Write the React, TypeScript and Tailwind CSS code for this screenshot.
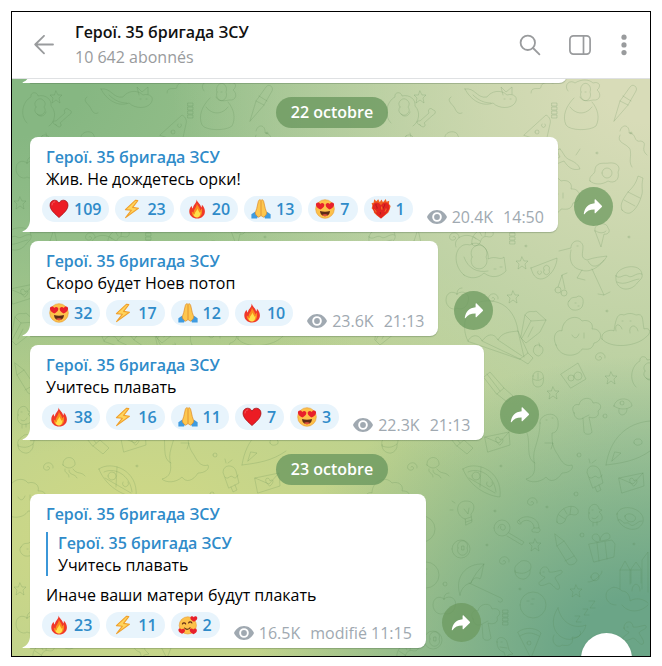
import type { ReactNode } from "react";

type EmojiName = "heart" | "bolt" | "fire" | "pray" | "loveEyes" | "burningHeart" | "adore";

type Message = {
  text: string;
  quote?: { author: string; text: string };
  reactions: { emoji: EmojiName; count: number }[];
  views: string;
  time: string;
};

const CHANNEL = "Герої. 35 бригада ЗСУ";

const days: { date: string; messages: Message[] }[] = [
  {
    date: "22 octobre",
    messages: [
      {
        text: "Жив. Не дождетесь орки!",
        reactions: [
          { emoji: "heart", count: 109 },
          { emoji: "bolt", count: 23 },
          { emoji: "fire", count: 20 },
          { emoji: "pray", count: 13 },
          { emoji: "loveEyes", count: 7 },
          { emoji: "burningHeart", count: 1 },
        ],
        views: "20.4K",
        time: "14:50",
      },
      {
        text: "Скоро будет Ноев потоп",
        reactions: [
          { emoji: "loveEyes", count: 32 },
          { emoji: "bolt", count: 17 },
          { emoji: "pray", count: 12 },
          { emoji: "fire", count: 10 },
        ],
        views: "23.6K",
        time: "21:13",
      },
      {
        text: "Учитесь плавать",
        reactions: [
          { emoji: "fire", count: 38 },
          { emoji: "bolt", count: 16 },
          { emoji: "pray", count: 11 },
          { emoji: "heart", count: 7 },
          { emoji: "loveEyes", count: 3 },
        ],
        views: "22.3K",
        time: "21:13",
      },
    ],
  },
  {
    date: "23 octobre",
    messages: [
      {
        text: "Иначе ваши матери будут плакать",
        quote: { author: CHANNEL, text: "Учитесь плавать" },
        reactions: [
          { emoji: "fire", count: 23 },
          { emoji: "bolt", count: 11 },
          { emoji: "adore", count: 2 },
        ],
        views: "16.5K",
        time: "modifié 11:15",
      },
    ],
  },
];

const HEART = "M10 18.6C7 15.6 1 11.4 1 6.2 1 3 3.2 1.2 5.6 1.2c2 0 3.5 1.1 4.4 2.9.9-1.8 2.4-2.9 4.4-2.9C16.8 1.2 19 3 19 6.2c0 5.2-6 9.4-9 12.4Z";

const emojis: Record<EmojiName, ReactNode> = {
  heart: (
    <>
      <path d={HEART} fill="#ec1c24" stroke="#9e1016" strokeWidth=".7" />
      <path d="M3 6c0-2 1.2-3.2 2.8-3.2" fill="none" stroke="#f6595c" strokeWidth="1" strokeLinecap="round" />
    </>
  ),
  bolt: (
    <path
      d="M13.6 1.2 3.4 10.6l6 .6-5.8 7.4L16.4 9.2l-5.8-.8 5.2-6.8Z"
      fill="#ffd45c"
      stroke="#f0a02c"
      strokeWidth="1.1"
      strokeLinejoin="round"
    />
  ),
  fire: (
    <>
      <path
        d="M9.6.6c1 3.4 4 4.4 4.6 8 .6-.8.8-1.7.7-2.8 2 2 3 4.3 3 6.7 0 4.3-3.4 7-7.7 7-4.4 0-7.9-2.7-7.9-7 0-2.3 1-4.3 2.3-5.7.1 1.3.5 2.1 1.3 2.7C6 6 9.8 4.5 9.6.6Z"
        fill="#f0382a"
      />
      <path
        d="M9.8 4.2c.6 2.4 3 3.6 3.4 7.2l1.6-2c1 4.6-.4 9-4.6 9-3.6 0-5.6-2.4-5.4-5.8l1.9 1.2c-.5-3.4 3.3-5.2 3.1-9.6Z"
        fill="#fb8c1d"
      />
      <path d="M10.4 9.2c.2 1.7 1.8 2.6 1.8 4.6l1.2-1c.3 3-1 5.6-3.3 5.6-2.3 0-3.7-1.5-3.6-3.7l1.4.7c-.3-2.5 2.2-3.5 2.5-6.2Z" fill="#ffe14a" />
    </>
  ),
  pray: (
    <>
      <path d="M.4 19.6v-4.4l3.6-2.4 3.4 3.8-1.4 3Z" fill="#3f9be0" />
      <path d="M19.6 19.6v-4.4L16 12.8l-3.4 3.8 1.4 3Z" fill="#3f9be0" />
      <path
        d="M9.9 1.2C8.7.4 7.6 1 7.3 2.5L5.7 9.6 4.2 14c.4 1.6 1.5 3.2 3.4 4.2l2.4-1.6 2.4 1.6c1.9-1 3-2.6 3.4-4.2l-1.5-4.4-1.6-7.1c-.3-1.5-1.4-2.1-2.4-1.3Z"
        fill="#fdc74f"
        stroke="#dc8a2b"
        strokeWidth=".7"
      />
      <path d="M10 2v14.6" stroke="#dc8a2b" strokeWidth=".8" />
    </>
  ),
  loveEyes: (
    <>
      <circle cx="10" cy="10" r="9.3" fill="#fdc14a" stroke="#e7992f" strokeWidth=".6" />
      <path d="M5.4 10.6C3.6 9.6.9 8 .9 5.7.9 3.2 4 2.9 5.2 5c1.5-2 4.4-1 4.1 1.2-.2 2-2.3 3.4-3.9 4.4Z" fill="#e8212b" />
      <path d="M14.6 10.6c1.8-1 4.5-2.6 4.5-4.9 0-2.5-3.1-2.8-4.3-.7-1.5-2-4.4-1-4.1 1.2.2 2 2.3 3.4 3.9 4.4Z" fill="#e8212b" />
      <path d="M5 12c3.2 1 6.8 1 10 0-.2 3.2-2 5.2-5 5.2S5.2 15.2 5 12Z" fill="#5e2b16" />
      <path d="M7 16c1-1 5-1 6 0-1.6 1.6-4.4 1.6-6 0Z" fill="#e2543f" />
    </>
  ),
  burningHeart: (
    <>
      <path
        d="M2.6 3.8 3.2.3l2.2 2L7.2.2l1.6 3L10.4.4l1.6 2.8L14.8 0l.8 2.8 2.6-1-.2 3.2 1.6 2-1 3.8-1.4 3-3.2 2.4-4 3.4-4.2-3-2.8-2.8-.4-2.4L.6 9.2l.8-2.2L.6 4Z"
        fill="#f0601f"
      />
      <path d="M10 19.6C7.2 17 1.6 12.4 1.6 8c0-2.6 1.900-4.500 3.900-4.500 1.900 0 3.600 1.300 4.500 3 .9-1.700 2.600-3 4.500-3 2 0 3.900 1.900 3.900 4.500 0 4.400-5.600 9-8.400 11.600Z" fill="#e3241f" />
      <path d="M5 5c-.6 2 1.600 2.600 1 4.600M12.400 9.400c-.4-1.600 1.600-2.400 1.400-4.200M9 13c.8.8.6 1.800 0 2.600" fill="none" stroke="#9f1813" strokeWidth=".8" />
      <path d="M3.4 10.6c1 .6 1.6 1.6 1.6 2.8M10.6 7.600c-.2 1.200.6 1.600.3 3M15 9.600c.2 1.400-.6 2-1 3" fill="none" stroke="#f58a22" strokeWidth="1" />
    </>
  ),
  adore: (
    <>
      <circle cx="9.8" cy="10.4" r="8.6" fill="#fdc14a" stroke="#e7992f" strokeWidth=".6" />
      <path d="M4.4 9c.6-1.5 2.6-1.5 3.3 0M10.6 8c.6-1.5 2.6-1.5 3.3 0M6.6 13c1.6 1.8 4 1.8 5.4-.2" fill="none" stroke="#5e2b16" strokeWidth="1.1" strokeLinecap="round" />
      <path d="M16 6.8c-1.8-.9-4-2.2-3.6-4.3.4-1.8 2.7-1.7 3.3-.3.9-1.5 3.5-1.2 3.6.8.1 1.9-1.9 2.9-3.3 3.8Z" fill="#e8212b" />
      <path d="M4 18.8c-1.7-.8-3.9-2-3.6-4 .3-1.7 2.6-1.6 3.2-.2.8-1.4 3.2-1.2 3.4.6.2 1.7-1.7 2.8-3 3.6Z" fill="#e8212b" />
      <path d="M15.6 19.2c-1.8-.8-4.2-2.2-3.9-4.4.3-1.9 2.9-1.8 3.5-.2.9-1.6 3.6-1.3 3.7.8.1 1.8-1.9 2.9-3.3 3.8Z" fill="#e8212b" />
    </>
  ),
};

// Outlines are drawn around their own centre and placed by the list below.
const outlines: Record<string, string> = {
  star: "M0-6 2-2 6-2 3 1 4 6 0 3-4 6-3 1-6-2-2-2Z",
  dot: "M-1 0a1 1 0 1 0 2 0 1 1 0 1 0-2 0",
  ring: "M-2 0a2 2 0 1 0 4 0 2 2 0 1 0-4 0",
  spiral: "M0 0c2-2 4 2 1 3-4 1-6-3-3-6 4-3 9 0 8 4",
  bone: "M-7 6c-4-1-4-5 0-4L2-6c-2-4 2-6 4-3 3 0 3 4 0 5L-3 4c3 3-1 6-4 2Z",
  squiggle: "M-4-10c-5 3 1 7 3 10s3 8 8 6",
  hook: "M-12 4c0-8 10-2 10-6s6-6 12-4",
  diver: "M-30-6c10-2 12 10 22 8 4-6 14-8 20-2 6-2 12 2 8 8s-16 6-22 0c-10 4-22-2-28-14ZM8 0l-2-8 5 5 6-5v7M9 4h1M15 4h1M-22 0c6 6 12 8 18 8",
  cheese: "M-14 10 8-10c4 2 5 6 4 9l-4 18ZM-3 7a2 2 0 1 0 4 0 2 2 0 1 0-4 0M4-1a2 2 0 1 0 3 0",
  bar: "M-2-8h5v3h-5Zm0 4h5v3h-5Zm0 4h5v3h-5Zm0 4h5v3h-5Z",
  dog: "M-14-8c-5-6 2-12 7-8 6-4 14-4 18 0 6-2 9 3 4 7 5 4 3 11-4 10-8 2-12 0-13-3M-8-1c-8 8-12 18-8 27 4 6 24 6 30 1 4-8 2-17-4-24M-1-7a5 6 0 1 0 9 0 5 6 0 1 0-9 0M3-7h1M-12 8c6 8 16 8 22 0",
  brush: "M-10 18-4-2 6-16c3-4 8 0 6 4L4 2ZM-4-2l8 4M-1-7l8 5",
  bear: "M-14 14c-8-8-4-22 4-26-1-5 6-6 7-1 8-2 14 4 13 10 6 6 4 16-2 20M-5-2a5 5 0 1 0 8 0 5 5 0 1 0-8 0M-4 5c3 4 8 2 9-2",
  lizard: "M-8-12c4 4 4 8 8 10s10 4 12 10c-8 2-12-2-16-8-6 2-12 6-14 4s6-6 10-8c-2-4-4-8 0-8ZM8-6l4-6",
  egg: "M-16 8c-2-6 6-6 5-12 2-8 10-5 14-6 8-1 12 4 9 9 2 8-4 12-10 9-6 4-14 4-18 0ZM-4 0a5 5 0 1 0 10 0 5 5 0 1 0-10 0",
  bottle: "M-12 16c-3-6 2-12 6-18 4-4 8-8 10-16l5 2c-2 8 0 12-1 16-2 8-6 16-12 19-3 1-6-1-8-3ZM-6-2l12 6M-10 6l11 6",
  branch: "M-12-14c2-8 10-6 9 2 8 0 4 10 12 8 8 2-2 8 6 14M-12-10c-4 8 6 8 10 14 2 8-2 12 2 18",
  cone: "M-7-4c-2-8 12-10 13-3 3 3 0 7-4 6L-1 12-7-4ZM-6-4c4 3 8 2 10 0",
  cat: "M-26-14c-4-10 12-16 20-8M-18 14c-14-12-8-34 6-30 8-6 20 4 18 14 8-4 12 2 16-2l2 14c-6 6-14 8-22 2-6 6-14 6-20 2ZM-10-4a8 8 0 1 0 14 0 8 8 0 1 0-14 0M-18-4c4 12 14 16 24 14M12 8h2M18 6h2",
  pizza: "M-13-5 13-15c0 6-4 16-12 20C-6 8-11 4-13-5ZM0-3a3 3 0 1 0 5 0 3 3 0 1 0-5 0M-6-2a2 2 0 1 0 3 0",
  cherry: "M-5 5a3 3 0 1 0 6 0 3 3 0 1 0-6 0M1 8a3 3 0 1 0 6 0 3 3 0 1 0-6 0M-2 2 2-10 5 4M2-10l5-2",
  bird: "M-21-10l12-3c0-8 10-10 12-2 0 8-3 12 4 14 8-3 14-3 20-4-4 8-16 18-26 14C-12 6-10-6-9-11M2 9l-5 8 8 2M12 8l12 26-6-1M24 34l6-3M-3-15h1M8 0c4 8 10 6 16-1",
  burger: "M-13-2C-12-12 12-16 13-4M-13-2c4 4 8-3 12 0s8-4 14-2c1 4-2 6-4 8-8 12-24 8-22-6ZM-12 4c8 4 14-2 22-3",
  berry: "M-7-2C-4-8 0-4 2-7c6 0 6 6 4 11-3 4-10 4-12 1-2-2-3-5-1-7ZM-1 0h1M2 3h1",
  apple: "M-1-6c6-5 14 0 11 8-2 7-8 8-11 6-4 3-11-1-11-8s6-10 11-6ZM-1-6c0-4 2-6 5-6",
  cake: "M-9-10C-6-16 0-12 2-14l10 9-6 12-14 11-5-5Zm0 0 6 6 15-1M-3-4l-9 17M-1 2l-5 10",
  cloud: "M-22 8c-5-10 2-16 6-14 0-12 14-18 20-10 6-2 12 2 10 8 10-1 12 12 2 14-2 8-8 6-12 6-4 8-22 10-26-4ZM-6-2c2 4 5 4 7-1M6-4v5",
  hat: "M-24 8c-2-8 10-10 12-8 2-14 4-18 10-16 4-2 8-2 12 0 8-2 6 4 8 14 6-2 8 4 2 8-10 10-36 12-44 2ZM-10 0c-2-8 4-8 6-2M4 2c-2-8 6-10 8-2M-4-10h1M4-10h1",
  acorn: "M-4-5c3-3 8 0 8 4 0 3-3 6-5 6-5-2-6-6-3-10ZM1-4 0-8",
  balloon: "M-38 14c-8-14-2-38 16-40 22-2 32 14 34 30M-38 14c4-8 12-6 14 0 6-8 12-8 16-1 4-8 12-8 20-9L22 26l-8 6ZM-24 14l38 18M-8 13l24 16M12 4l6 26M14 32l8 5 5-6-5-5",
  scope: "M-12-10l6-5 14 16-7 6ZM1 7l10 8 6-6-9-8M-9-13l13 17",
  mouse: "M-5-4c0-6 9-6 10-1 1 4 1 12-5 12-5 0-6-5-5-11ZM-5-1c3 2 7 2 10-1M0-7v6",
  camera: "M-13-2 4-13l8 16L-3 12ZM-6 2a3 3 0 1 0 6 0 3 3 0 1 0-6 0M0 0a4 4 0 1 0 8 0 4 4 0 1 0-8 0",
  mushroom: "M-9-1C-8-10 8-11 9-1 4 3-4 3-9-1ZM-4 2c-2 8 8 8 8 0M-3-4a2 2 0 1 0 4 0 2 2 0 1 0-4 0",
  tree: "M-13-2c-4-6 2-10 5-8 1-8 13-9 14-2 8-2 10 5 5 8 2 6-4 8-9 6l3 15c-1 3-7 3-8 0L-4 3c-4 3-9 0-9-5ZM-4 3l6-3",
  rocket: "M-30 26c4-26 20-42 44-44M-30 26c16-2 30-4 44-14M-24 22l9-8-6-1ZM-2 4a4 3 0 1 0 8-2 4 3 0 1 0-8 2",
  dino: "M-7-30c-2-8 16-14 18-2 1 8-2 12-6 12 0 8 0 14 6 22 4 8 8 12 14 10 2 4-3 8-10 8-5 8-12 10-16 4-6 6-16 6-20 2 8-2 10-8 8-18-2-12 6-20 6-38ZM-20-20c4 10-2 26 8 30M-2-10h8l-2 6M-1-33h1M5-35h1",
  jelly: "M-10-2c-1-10 13-10 12 0-4 4-8 4-12 0ZM-8 2c-1 5 4 3 4 8M-4 3c0 6 6 3 8 8M0 2c4 6 8 2 12 7",
  slice: "M-20-13C-8-22 20-12 17 15 4 14-14 4-20-13ZM-15-10c10-5 26 2 28 20M-14-4l26 15M-2-15l-1 20M-11-6a4 4 0 1 0 8 0 4 4 0 1 0-8 0M4 0a3 3 0 1 0 5 0",
  pop: "M-8-6c0-8 11-8 13-1l3 12-10 5Zm2 5c3 4 5-3 8 0s5-2 5-2M0 9l2 5 4-2-2-5M-5-15l-1-4M-3-15l4-3",
  mail: "M-13-4 11-9l1 13-22 7Zm0 0L1 2l10-11M-2 0c-2-5 4-5 4-1 3-3 5 1 0 5Z",
  bulb: "M-2 6c-10-3-10-18 1-18 10 0 9 9 5 13l1 8-6 3ZM-2 6l6-2M-1 9l6-2M-3-4l4 5 1-6M-12-10l-3-2M-14-3h-3",
  rainbow: "M-11-3c4-6 20-4 20 8h-5c0-8-10-10-13-5ZM-11-3c-3 0-2 5 2 4M9 5c3 2 0 6-4 4-4 1-4-3-1-4",
  croissant: "M-10 7C-12-3 0-11 8-8c5 3 4 8-1 8-6-2-8 2-9 6-2 3-7 4-8 1ZM-8 0l6 4M-3-6l3 5M4-8 3-1",
  duck: "M-6 0c-2-9 9-12 10-4l3 1-3 2c4 3 5 9-1 10-6 2-11-2-9-9ZM-3-3h1M-3 5c3 2 5 0 6-2M-2 10v3M2 9v3",
  donut: "M-13-4C-10-16 16-10 13 4 8 18-14 10-13-4ZM-5-2C-3-7 8-3 5 2 2 6-6 3-5-2ZM-12 2c4-2 4 4 8 3s4 4 8 2 4-4 8-4",
  lolly: "M-13-4a8 8 0 1 0 16 0 8 8 0 1 0-16 0M-9-4c1-6 9-4 7 1-3 3-6-1-4-3M2 1l15 9-2 3L0 4",
  ball: "M-9 0a9 9 0 1 0 18 0 9 9 0 1 0-18 0M-3-1a5 5 0 1 0 9 0 5 5 0 1 0-9 0M1-3h2v4H1Z",
  pencil: "M-11-16l9 7 13 19c-1 4-6 6-9 4l-11-18ZM-9-4l7-5M-1 11l9-5",
  gift: "M-13-4 10-8l3 4-1 13-20 5ZM-5-5l2 18M3-6l2 17M-3-6c-8 0-9-8-3-8 3 0 4 4 4 7 0-8 10-11 10-4 0 3-5 3-9 4",
  castle: "M-14 10V-9l5-9 5 9v14M-14-9h10M-3 4v-14l5-7 5 7v14M-3-9h9M8 10v-29l6-8v40M-2 12c0-9 8-9 8 0M-18 26c-12 0-12-14-6-16 4-4 10 0 12 2 6 0 8 6 8 10 6-4 14-2 18 2M-12 26c6 8 18 8 26 0",
  umbrella: "M-16 12c-6-18 6-32 24-31-2 6-2 12-4 15-4-3-8 0-9 4-6 1-10 6-11 12ZM-7 0l32 15c4 3-1 6-3 3M8-19C2-12-2-8-5 0",
  cup: "M-8 0C-10-6-3-8-2-10c8-2 12 4 9 9 1 5-4 10-8 9-5-1-7-4-7-8ZM-8 1c6 2 10 2 15-2",
  ginger: "M-12-5c0-8 9-8 9-1 5 1 12-3 13-1 2 3-6 4-7 7 2 4 6 8 4 11-3 2-6-5-10-6-4 2-9 4-10 1s5-4 6-7c-3-1-5-2-5-4ZM-9-6h1",
  planet: "M-4 0c0-5 8-6 8 0 0 5-8 5-8 0ZM-7 5C-3 6 8-2 7-6",
  bowling: "M-13 0a13 13 0 1 0 26 0 13 13 0 1 0-26 0M-6-4h2M-1-6h2M-2-1h2",
  moon: "M-10-19C-18-8-16 8-2 12 6 14 16 8 18-2 8 2-6-2-10-19ZM-14 8c-4 8 4 14 8 10 8 2 12-2 10-8 8 2 10-4 8-6",
  zzz: "M-8 6h5l-4 6h5M0-1h5l-4 6h5M6-9h6l-5 7h5",
  triangle: "M-12-9C-6-14 6-14 11-8L1 17ZM-10-5c6-4 12-4 19 0M-3 2a2 2 0 1 0 4 0 2 2 0 1 0-4 0",
  fish: "M-7-4c-1-6 8-6 10 0l2 8 4 4-5 1-2 4-2-7c-5-1-7-5-7-10ZM-3-4h1M-4 1l7 1",
};

// outline, x, y
const doodles: [string, number, number][] = [
  ["bear", 393, 30], ["bone", 415, 40], ["star", 408, 18], ["squiggle", 443, 28], ["diver", 483, 16],
  ["bar", 542, 32], ["cheese", 526, 46], ["hook", 531, 10], ["dog", 570, 20], ["brush", 612, 24],
  ["dot", 619, 54], ["branch", 620, 66], ["lizard", 556, 82], ["egg", 594, 94], ["dot", 585, 74],
  ["bottle", 622, 115], ["cone", 590, 156], ["cloud", 545, 118], ["berry", 514, 128],
  ["acorn", 398, 62], ["cone", 440, 64], ["fish", 473, 70], ["mushroom", 506, 68], ["star", 372, 124],
  ["apple", 380, 90], ["ring", 495, 104], ["burger", 370, 160], ["cherry", 404, 160], ["spiral", 441, 158],
  ["croissant", 470, 158], ["bar", 500, 158],
  ["cat", 470, 182], ["star", 510, 184], ["dot", 514, 167], ["pizza", 532, 194], ["cherry", 548, 206],
  ["bird", 568, 182], ["burger", 617, 199], ["berry", 564, 224], ["apple", 446, 221], ["star", 501, 218],
  ["spiral", 480, 219], ["cake", 522, 246], ["cloud", 566, 258], ["hat", 614, 252], ["acorn", 527, 272],
  ["spiral", 587, 278], ["balloon", 494, 248], ["scope", 484, 308], ["mouse", 526, 301], ["camera", 562, 297],
  ["star", 599, 299], ["bear", 638, 294], ["dot", 595, 232], ["mushroom", 611, 328],
  ["star", 541, 314], ["tree", 575, 336], ["ring", 593, 337], ["rocket", 624, 360], ["dot", 617, 158],
  ["cake", 376, 248], ["mail", 375, 214], ["pencil", 378, 300], ["duck", 376, 336],
  ["cup", 378, 366], ["scope", 444, 360], ["mail", 486, 362], ["dino", 535, 374], ["jelly", 425, 388],
  ["spiral", 399, 388], ["slice", 471, 403], ["pop", 583, 399], ["mail", 620, 403], ["ring", 567, 376],
  ["dot", 489, 387], ["ring", 564, 415], ["spiral", 519, 423], ["dot", 535, 428], ["dot", 483, 432],
  ["bulb", 455, 434], ["rainbow", 518, 444], ["croissant", 555, 436], ["duck", 583, 434], ["donut", 618, 439],
  ["lolly", 495, 453], ["ball", 449, 470], ["star", 523, 466], ["dot", 475, 466], ["pencil", 554, 471],
  ["ring", 570, 456], ["gift", 590, 469], ["dot", 622, 465], ["castle", 622, 500], ["spiral", 491, 482],
  ["umbrella", 464, 504], ["cup", 511, 492], ["ginger", 540, 499], ["planet", 583, 498], ["star", 564, 512],
  ["bowling", 521, 526], ["moon", 556, 548], ["zzz", 571, 531], ["apple", 433, 526], ["ring", 433, 505],
  ["bowling", 410, 450], ["bowling", 414, 496], ["tree", 474, 542], ["bar", 493, 539], ["triangle", 518, 562],
  ["fish", 492, 567], ["ball", 421, 561], ["ginger", 624, 554], ["dot", 508, 510], ["cloud", 376, 420],
  ["berry", 380, 470], ["star", 372, 510], ["apple", 380, 545], ["croissant", 395, 572],
];

function Wallpaper() {
  return (
    <svg className="absolute inset-0 h-full w-full" aria-hidden="true">
      <defs>
        <g id="doodles">
          {doodles.map(([name, x, y]) => (
            <path key={`${name}-${x}-${y}`} d={outlines[name]} transform={`translate(${x} ${y})`} />
          ))}
        </g>
      </defs>
      <g fill="none" stroke="#4f7d4a" strokeOpacity=".19" strokeWidth="1" strokeLinejoin="round" strokeLinecap="round">
        <use href="#doodles" x="-364" />
        <use href="#doodles" />
        <use href="#doodles" x="364" />
        <use href="#doodles" x="728" />
      </g>
    </svg>
  );
}

function Header() {
  return (
    <header className="flex h-[67px] items-center border-b border-[#dfe1e3] bg-white pr-[21px] pl-[22px] text-[#999b9d]">
      <button type="button" aria-label="Retour" className="mr-[21px]">
        <svg className="size-5" viewBox="0 0 20 20" fill="none" stroke="currentColor" strokeWidth="1.8" strokeLinecap="round" strokeLinejoin="round">
          <path d="M19 9.5H1.2M10 .8 1.2 9.5l8.8 8.8" />
        </svg>
      </button>
      <div className="min-w-0 flex-1">
        <h1 className="truncate text-base leading-[25px] font-semibold text-[#111]">{CHANNEL}</h1>
        <p className="text-base leading-[25px]">10 642 abonnés</p>
      </div>
      <div className="flex items-center gap-7">
        <button type="button" aria-label="Rechercher">
          <svg className="size-[22px]" viewBox="0 0 22 22" fill="none" stroke="currentColor" strokeWidth="1.8" strokeLinecap="round">
            <circle cx="8.8" cy="8.8" r="7.2" />
            <path d="m14 14 6.4 6.4" />
          </svg>
        </button>
        <button type="button" aria-label="Panneau latéral">
          <svg className="size-[22px]" viewBox="0 0 22 22" fill="none" stroke="currentColor" strokeWidth="1.7">
            <rect x=".9" y="1.9" width="20.2" height="18.2" rx="3.5" />
            <path d="M14.5 2v18" />
          </svg>
        </button>
        <button type="button" aria-label="Plus">
          <svg className="h-[22px] w-[10px]" viewBox="0 0 10 22" fill="currentColor">
            <circle cx="5" cy="3.2" r="2.6" />
            <circle cx="5" cy="10.9" r="2.6" />
            <circle cx="5" cy="18.6" r="2.6" />
          </svg>
        </button>
      </div>
    </header>
  );
}

function Tail() {
  return (
    <svg className="absolute bottom-0 -left-2 h-3 w-[9px]" viewBox="0 0 9 12" fill="#fff" aria-hidden="true">
      <path d="M9 0H8C8 5 5.5 9.5.8 11.2.3 11.4.5 12 1 12H9Z" />
    </svg>
  );
}

function DateBadge({ children }: { children: ReactNode }) {
  return (
    <div className="mt-[5px] self-center rounded-full bg-[#6c995f]/80 px-[15px] py-1 text-base leading-[23px] font-semibold text-white">
      {children}
    </div>
  );
}

function MessageRow({ message }: { message: Message }) {
  return (
    <article className="flex items-end gap-4">
      <div className="relative rounded-lg rounded-bl-none bg-white px-[14px] pt-[9px] pb-[10px] shadow-[0_1px_1px_rgba(60,90,60,0.3)]">
        <Tail />
        <div className="pl-[2px] text-base leading-[22px]">
          <h2 className="font-semibold text-[#2f8bc9]">{CHANNEL}</h2>
          {message.quote && (
            <blockquote className="mt-[7px] mb-2 border-l-2 border-[#3b97d8] pl-[10px]">
              <cite className="block font-semibold text-[#2f8bc9] not-italic">{message.quote.author}</cite>
              <p>{message.quote.text}</p>
            </blockquote>
          )}
          <p>{message.text}</p>
        </div>
        <div className="mt-[6px] -ml-[2px] flex gap-[14px]">
          <div className="flex gap-[6px]">
            {message.reactions.map(({ emoji, count }) => (
              <button
                key={emoji}
                type="button"
                className="flex h-[26px] items-center gap-[5px] rounded-full bg-[#e8f4fc] pr-2 pl-[7px] text-base font-semibold text-[#2f8bc9]"
              >
                <svg className="size-5" viewBox="0 0 20 20" aria-hidden="true">
                  {emojis[emoji]}
                </svg>
                {count}
              </button>
            ))}
          </div>
          <div className="-mb-[6px] flex items-center self-end text-base leading-[22px] whitespace-nowrap text-[#a0a9b1]">
            <svg className="mr-[5px] h-[14px] w-5" viewBox="0 0 20 14" fill="currentColor" aria-hidden="true">
              <path fillRule="evenodd" d="M10 0c4.5 0 8.2 2.8 10 7-1.8 4.2-5.5 7-10 7S1.8 11.2 0 7c1.8-4.2 5.5-7 10-7Zm0 2.2a4.8 4.8 0 1 0 0 9.6 4.8 4.8 0 0 0 0-9.6Z" />
              <circle cx="10" cy="7" r="2.9" />
            </svg>
            <span className="mr-[10px]">{message.views}</span>
            <time>{message.time}</time>
          </div>
        </div>
      </div>
      <button type="button" aria-label="Partager" className="mb-[6px] flex size-[39px] shrink-0 items-center justify-center rounded-full bg-[#6c995f]/75 text-white">
        <svg className="h-4 w-5" viewBox="0 0 20 16" fill="currentColor">
          <path d="M11.6.8c0-.6.6-.8 1-.4l6.2 6.3c.4.4.4.8 0 1.2l-6.2 6.2c-.4.4-1 .2-1-.4v-3.3C7 10.3 4 11.6 1.6 15c-.3.4-.9.3-.8-.3C1.6 9 5 4.8 11.6 4.2Z" />
        </svg>
      </button>
    </article>
  );
}

export default function App() {
  return (
    <div className="min-h-screen bg-white px-[11px] pt-[11px] pb-[9px] font-['Open_Sans','Noto_Sans',sans-serif] text-black">
      <div className="relative overflow-hidden border border-black">
        <Header />
        <main className="relative bg-[radial-gradient(ellipse_62%_52%_at_100%_100%,#6ba587_20%,transparent),radial-gradient(ellipse_75%_75%_at_100%_0%,#d8dcb8_10%,transparent),radial-gradient(ellipse_75%_65%_at_0%_0%,#86b782_15%,transparent),radial-gradient(ellipse_80%_60%_at_20%_80%,#ced886_10%,transparent)] bg-[#accb96]">
          <Wallpaper />
          <div className="relative">
            {/* Lower edge of the message scrolled under the header */}
            <div className="flex h-[5px] items-end overflow-hidden pr-4 pl-[18px]">
              <div className="relative mb-px h-5 w-[537px] rounded-lg rounded-bl-none bg-white shadow-[0_1px_1px_rgba(60,90,60,0.3)]">
                <Tail />
              </div>
            </div>
            <div className="flex flex-col gap-[9px] pt-2 pr-4 pb-2 pl-[18px]">
              {days.map((day) => (
                <section key={day.date} className="flex flex-col gap-[9px]">
                  <DateBadge>{day.date}</DateBadge>
                  {day.messages.map((message) => (
                    <MessageRow key={message.text} message={message} />
                  ))}
                </section>
              ))}
            </div>
          </div>
        </main>
        <button type="button" aria-label="Aller en bas" className="absolute right-[18px] -bottom-[28px] size-[51px] rounded-full bg-white shadow" />
      </div>
    </div>
  );
}
